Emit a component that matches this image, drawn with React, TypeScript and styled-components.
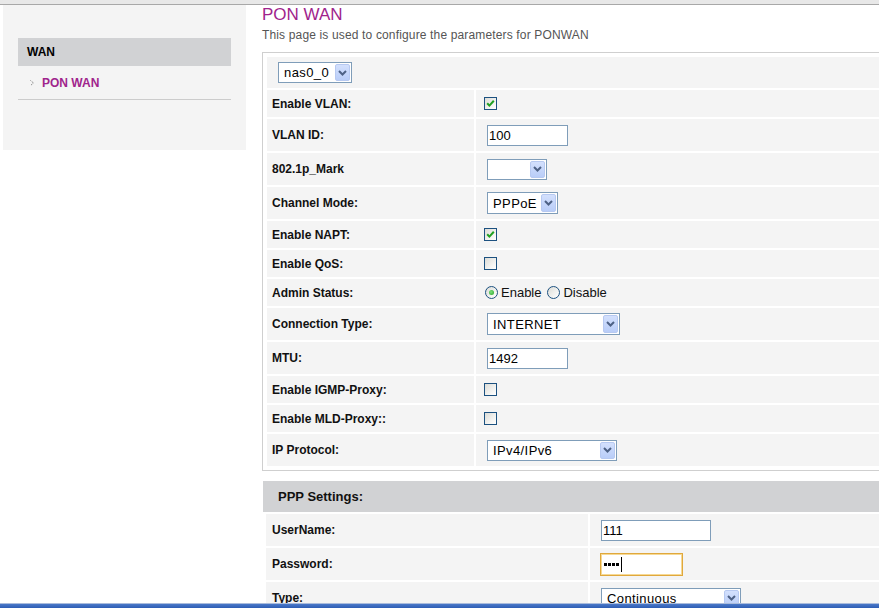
import React from "react";
import styled, { createGlobalStyle } from "styled-components";

const GlobalStyle = createGlobalStyle`
  html, body {
    margin: 0;
    padding: 0;
    overflow: hidden;
    background: #ffffff;
    font-family: "Liberation Sans", Arial, sans-serif;
    color: #111;
  }
`;

const TopStrip = styled.div`
  height: 4px;
  background: #e8e8e8;
  border-bottom: 1px solid #a8a8a8;
`;

const Layout = styled.div`
  display: flex;
  align-items: flex-start;
  width: 1000px;
`;

const Sidebar = styled.nav`
  box-sizing: border-box;
  margin-left: 3px;
  width: 243px;
  height: 145px;
  padding: 33px 15px 0;
  background: #f4f4f4;
`;

const MenuHeader = styled.div`
  height: 28px;
  line-height: 28px;
  padding-left: 9px;
  background: #d1d2d4;
  font-size: 12px;
  font-weight: bold;
  color: #000;
`;

const MenuItem = styled.div`
  display: flex;
  align-items: center;
  gap: 8px;
  height: 34px;
  padding: 1px 0 0 12px;
  box-sizing: border-box;
  border-bottom: 1px solid #cccccc;
  font-size: 12px;
  font-weight: bold;
  color: #a0248c;
`;

const Main = styled.main`
  display: flex;
  flex-direction: column;
  margin-left: 16px;
  width: 640px;
`;

const Title = styled.h1`
  margin: 0;
  font-size: 17px;
  line-height: 20px;
  font-weight: normal;
  color: #a0248c;
`;

const Subtitle = styled.p`
  margin: 2px 0 0;
  font-size: 12px;
  line-height: 16px;
  letter-spacing: 0.15px;
  color: #555;
`;

const Panel = styled.section`
  display: flex;
  flex-direction: column;
  gap: 2px;
  margin-top: 9px;
  padding: 4px;
  border: 1px solid #cfcfcf;
`;

const Row = styled.div<{ $h: number; $label?: number }>`
  display: grid;
  grid-template-columns: ${(p) => p.$label ?? 207}px 1fr;
  column-gap: 2px;
  height: ${(p) => p.$h}px;
`;

const WideRow = styled.div`
  display: flex;
  align-items: center;
  height: 31px;
  padding-left: 8px;
  background: #f4f4f4;
`;

const LabelCell = styled.div`
  display: flex;
  align-items: center;
  padding-left: 5px;
  background: #f4f4f4;
  font-size: 12px;
  font-weight: bold;
  color: #111;
`;

const ValueCell = styled.div`
  display: flex;
  align-items: center;
  padding-left: 8px;
  background: #f4f4f4;
  font-size: 12px;
`;

const TextBox = styled.input<{ $w: number }>`
  box-sizing: border-box;
  margin: 0 0 0 3px;
  width: ${(p) => p.$w}px;
  height: 21px;
  padding: 1px 1px;
  border: 1px solid #7f9db9;
  background: #fff;
  font-family: "Liberation Sans", Arial, sans-serif;
  font-size: 13px;
  color: #000;
  outline: none;
`;

const PasswordBox = styled.div`
  box-sizing: border-box;
  display: flex;
  align-items: center;
  gap: 1px;
  margin-left: 2px;
  width: 83px;
  height: 23px;
  padding-left: 3px;
  border: 1px solid #e0a83c;
  box-shadow: inset 0 0 0 1px #f6d995;
  background: #fff;
`;

const Dot = styled.span`
  width: 3px;
  height: 3px;
  background: #000;
`;

const Caret = styled.span`
  margin-left: 1px;
  width: 1px;
  height: 15px;
  background: #000;
`;

const SelectBox = styled.div<{ $w: number; $h?: number }>`
  box-sizing: border-box;
  display: flex;
  align-items: stretch;
  margin-left: 3px;
  width: ${(p) => p.$w}px;
  height: ${(p) => p.$h ?? 21}px;
  border: 1px solid #7f9db9;
  background: #fff;
`;

const SelectText = styled.span`
  flex: 1;
  display: flex;
  align-items: center;
  padding-left: 5px;
  font-size: 13px;
  letter-spacing: 0.4px;
  color: #000;
  white-space: nowrap;
  overflow: hidden;
`;

const SelectButton = styled.span`
  display: flex;
  align-items: center;
  justify-content: center;
  width: 15px;
  margin: 1px;
  border-radius: 2px;
  background: linear-gradient(180deg, #d3e0fd 0%, #b9cdf8 100%);
  border: 1px solid #b7c9f1;
  box-sizing: border-box;
`;

const Check = styled.span`
  box-sizing: border-box;
  display: inline-flex;
  align-items: center;
  justify-content: center;
  width: 13px;
  height: 13px;
  border: 1px solid #1c5180;
  background: linear-gradient(135deg, #dcdcd7 0%, #f6f6f4 70%, #ffffff 100%);
`;

const RadioGroup = styled.div`
  display: flex;
  align-items: center;
  margin-left: 1px;
  font-size: 13px;
  color: #111;
`;

const RadioOption = styled.label`
  display: inline-flex;
  align-items: center;
  gap: 3px;
  margin-right: 6px;
`;

const RadioDot = styled.span`
  box-sizing: border-box;
  display: inline-flex;
  align-items: center;
  justify-content: center;
  width: 13px;
  height: 13px;
  border-radius: 50%;
  border: 1px solid #1c5180;
  background: linear-gradient(135deg, #dcdcd7 0%, #f6f6f4 70%, #ffffff 100%);
`;

const Pip = styled.span`
  width: 5px;
  height: 5px;
  border-radius: 50%;
  background: radial-gradient(circle at 40% 40%, #7fe07f, #21a121);
`;

const PppSection = styled.section`
  display: flex;
  flex-direction: column;
  gap: 2px;
  margin: 10px 0 0 1px;
`;

const PppHeader = styled.div`
  height: 31px;
  display: flex;
  align-items: center;
  padding-left: 15px;
  background: #d1d2d4;
  font-size: 13px;
  font-weight: bold;
  color: #111;
`;

const PppRows = styled.div`
  display: flex;
  flex-direction: column;
  gap: 2px;
  padding-left: 3px;
`;

const PppLabel = styled(LabelCell)`
  padding-left: 6px;
`;

const TaskEdge = styled.div`
  position: fixed;
  left: 0;
  right: 0;
  bottom: 0;
  height: 5px;
  background: linear-gradient(180deg, #a9bbdc 0px, #a9bbdc 1px, #4a78c8 1px, #2d5db4 100%);
`;

const Chevron = () => (
  <svg width="9" height="6" viewBox="0 0 9 6">
    <path d="M1 1 L4.5 4.5 L8 1" fill="none" stroke="#4d6185" strokeWidth="2" />
  </svg>
);

const Arrow = () => (
  <svg width="4" height="6" viewBox="0 0 4 6">
    <path d="M0.5 0.5 L3.5 3 L0.5 5.5" fill="none" stroke="#777" strokeWidth="1" strokeDasharray="1 1" />
  </svg>
);

const Select = ({ w, value, h }: { w: number; value: string; h?: number }) => (
  <SelectBox $w={w} $h={h}>
    <SelectText>{value}</SelectText>
    <SelectButton>
      <Chevron />
    </SelectButton>
  </SelectBox>
);

const Checkbox = ({ checked }: { checked?: boolean }) => (
  <Check>
    {checked && (
      <svg width="9" height="9" viewBox="0 0 9 9">
        <path d="M1.2 4.2 L3.4 6.6 L7.8 1.8" fill="none" stroke="#21a121" strokeWidth="2" />
      </svg>
    )}
  </Check>
);

const Radio = ({ checked, label }: { checked?: boolean; label: string }) => (
  <RadioOption>
    <RadioDot>{checked && <Pip />}</RadioDot>
    {label}
  </RadioOption>
);

const App = () => {
  return (
    <>
      <GlobalStyle />
      <TopStrip />
      <Layout>
        <Sidebar>
          <MenuHeader>WAN</MenuHeader>
          <MenuItem>
            <Arrow />
            PON WAN
          </MenuItem>
        </Sidebar>
        <Main>
          <Title>PON WAN</Title>
          <Subtitle>This page is used to configure the parameters for PONWAN</Subtitle>
          <Panel>
            <WideRow>
              <Select w={74} value="nas0_0" />
            </WideRow>
            <Row $h={27}>
              <LabelCell>Enable VLAN:</LabelCell>
              <ValueCell>
                <Checkbox checked />
              </ValueCell>
            </Row>
            <Row $h={32}>
              <LabelCell>VLAN ID:</LabelCell>
              <ValueCell>
                <TextBox $w={81} defaultValue="100" readOnly />
              </ValueCell>
            </Row>
            <Row $h={32}>
              <LabelCell>802.1p_Mark</LabelCell>
              <ValueCell>
                <Select w={60} value="" />
              </ValueCell>
            </Row>
            <Row $h={32}>
              <LabelCell>Channel Mode:</LabelCell>
              <ValueCell>
                <Select w={71} value="PPPoE" h={22} />
              </ValueCell>
            </Row>
            <Row $h={27}>
              <LabelCell>Enable NAPT:</LabelCell>
              <ValueCell>
                <Checkbox checked />
              </ValueCell>
            </Row>
            <Row $h={27}>
              <LabelCell>Enable QoS:</LabelCell>
              <ValueCell>
                <Checkbox />
              </ValueCell>
            </Row>
            <Row $h={27}>
              <LabelCell>Admin Status:</LabelCell>
              <ValueCell>
                <RadioGroup>
                  <Radio checked label="Enable" />
                  <Radio label="Disable" />
                </RadioGroup>
              </ValueCell>
            </Row>
            <Row $h={32}>
              <LabelCell>Connection Type:</LabelCell>
              <ValueCell>
                <Select w={133} value="INTERNET" h={22} />
              </ValueCell>
            </Row>
            <Row $h={32}>
              <LabelCell>MTU:</LabelCell>
              <ValueCell>
                <TextBox $w={81} defaultValue="1492" readOnly />
              </ValueCell>
            </Row>
            <Row $h={27}>
              <LabelCell>Enable IGMP-Proxy:</LabelCell>
              <ValueCell>
                <Checkbox />
              </ValueCell>
            </Row>
            <Row $h={27}>
              <LabelCell>Enable MLD-Proxy::</LabelCell>
              <ValueCell>
                <Checkbox />
              </ValueCell>
            </Row>
            <Row $h={32}>
              <LabelCell>IP Protocol:</LabelCell>
              <ValueCell>
                <Select w={130} value="IPv4/IPv6" />
              </ValueCell>
            </Row>
          </Panel>
          <PppSection>
            <PppHeader>PPP Settings:</PppHeader>
            <PppRows>
              <Row $h={32} $label={322}>
                <PppLabel>UserName:</PppLabel>
                <ValueCell>
                  <TextBox $w={110} defaultValue="111" readOnly />
                </ValueCell>
              </Row>
              <Row $h={32} $label={322}>
                <PppLabel>Password:</PppLabel>
                <ValueCell>
                  <PasswordBox>
                    <Dot />
                    <Dot />
                    <Dot />
                    <Dot />
                    <Caret />
                  </PasswordBox>
                </ValueCell>
              </Row>
              <Row $h={32} $label={322}>
                <PppLabel>Type:</PppLabel>
                <ValueCell>
                  <Select w={140} value="Continuous" />
                </ValueCell>
              </Row>
            </PppRows>
          </PppSection>
        </Main>
      </Layout>
      <TaskEdge />
    </>
  );
};

export default App;
